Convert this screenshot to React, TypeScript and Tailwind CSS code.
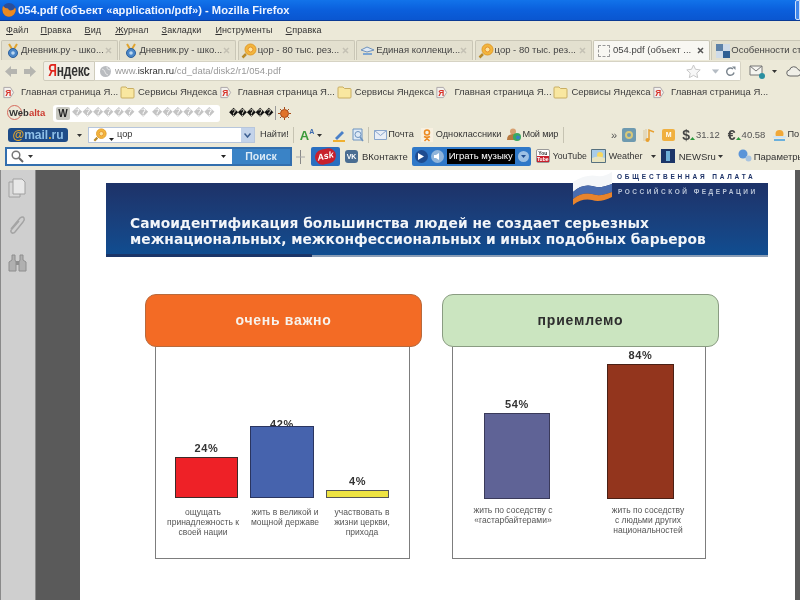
import React from "react";

const Ya = ({ className = "" }: { className?: string }) => (
  <svg width="13" height="13" viewBox="0 0 14 14" className={`shrink-0 ${className}`}>
    <path d="M2 1.500h7l3.500 5.500L9 12.500H2z" fill="#f3f1ee" stroke="#a9a4a8" />
    <text x="3.500" y="10.500" fontSize="9" fontWeight="700" fill="#d8342b" fontFamily="Liberation Sans">Я</text>
  </svg>
);

const Folder = () => (
  <svg width="15" height="13" viewBox="0 0 15 13" className="shrink-0">
    <path d="M1 3V2q0-1 1-1h4l1.500 1.500H13q1 0 1 1V11q0 1-1 1H2q-1 0-1-1z" fill="#f9e7a0" stroke="#c9ae62" />
  </svg>
);

const Medal = () => (
  <svg width="14" height="16" viewBox="0 0 14 16">
    <path d="M3 1l3 5M11 1L8 6" stroke="#e0a32e" strokeWidth="2" />
    <circle cx="7" cy="10" r="4.500" fill="#4a86c8" stroke="#2b5f9c" />
    <circle cx="7" cy="10" r="1.800" fill="#bcd8f0" />
  </svg>
);

const CoinSearch = ({ size = 16 }: { size?: number }) => (
  <svg width={size} height={size} viewBox="0 0 16 16" className="shrink-0">
    <path d="M5 11L1.500 14.500" stroke="#b88a2a" strokeWidth="2.500" />
    <circle cx="9.500" cy="6.500" r="5.500" fill="#f2b63c" stroke="#e29a28" />
    <circle cx="9.500" cy="6.500" r="2.500" fill="#fbe39c" stroke="#e8902c" />
  </svg>
);

const Triangle = ({ className = "", color = "#333" }: { className?: string; color?: string }) => (
  <svg width="5" height="3" viewBox="0 0 5 3" className={`shrink-0 ${className}`}>
    <path d="M0 0h5L2.500 3z" fill={color} />
  </svg>
);

const Close = ({ dark }: { dark?: boolean }) => (
  <svg width="7" height="7" viewBox="0 0 7 7" className="ml-auto shrink-0">
    <path d="M1 1l5 5M6 1L1 6" stroke={dark ? "#555" : "#c4c1b4"} strokeWidth="1.500" />
  </svg>
);

const Tab = ({ icon, label, active, closable = true }: { icon: React.ReactNode; label: string; active?: boolean; closable?: boolean }) => (
  <div className={`flex h-[20px] w-[117px] shrink-0 items-center rounded-t-[2px] border border-b-0 border-[#c9c6b6] pl-[3px] pr-[5px] ${active ? "bg-[#f8f7f2]" : "bg-[#e3e0cf]"}`}>
    <span className="flex w-[15px] shrink-0 justify-center">{icon}</span>
    <span className="ml-[1px] whitespace-nowrap text-[9.500px] text-[#444]">{label}</span>
    {closable && <Close dark={active} />}
  </div>
);

const Bookmarks = () => (
  <div className="flex h-[20px] shrink-0 items-center pl-[2px] pt-[1px] text-[9.500px] text-[#3c3c3c]">
    {[0, 1, 2, 3].map((i) => (
      <div key={i} className="flex w-[216.700px] shrink-0 items-center">
        <Ya />
        <span className="ml-[6px] w-[99px] shrink-0 whitespace-nowrap">Главная страница Я...</span>
        {i < 3 && (
          <>
            <Folder />
            <span className="ml-[3px] whitespace-nowrap">Сервисы Яндекса</span>
          </>
        )}
      </div>
    ))}
  </div>
);

const Sep = ({ className = "" }: { className?: string }) => <div className={`h-[16px] w-px shrink-0 bg-[#c6c3b2] ${className}`} />;

const Bar = ({ pct, h, color, border, w, labelClass = "mb-[2px]" }: { pct: string; h: string; color: string; border: string; w: string; labelClass?: string }) => (
  <div className={`flex flex-col items-center ${w}`}>
    <span className={`text-[11px] font-bold leading-[13px] tracking-[0.6px] text-[#333] ${labelClass}`}>{pct}</span>
    <div className={`w-full border ${h} ${color} ${border}`} />
  </div>
);

const Caption = ({ lines, className = "" }: { lines: string[]; className?: string }) => (
  <div className={`text-center text-[8.500px] leading-[10px] text-[#555] ${className}`}>
    {lines.map((l) => (
      <div key={l} className="whitespace-nowrap">{l}</div>
    ))}
  </div>
);

export default function App() {
  return (
    <div className="flex h-[600px] w-[800px] flex-col overflow-hidden bg-white font-['Liberation_Sans',sans-serif] blur-[0.5px]">
      {/* title bar */}
      <div className="flex h-[21px] shrink-0 items-center border-b border-[#0a3a94] bg-gradient-to-b from-[#1273ea] via-[#0b5fdc] to-[#0a56d0] pl-[1px]">
        <svg width="16" height="16" viewBox="0 0 16 16">
          <circle cx="8" cy="8" r="7" fill="#2a4f9c" />
          <path d="M2 4q-2 6 2 9.500 5 3 9-1 3-4 1-7-1 3-5 3-2-1-2-2-3 0-5-2.500z" fill="#ec8a22" />
        </svg>
        <span className="ml-[1px] whitespace-nowrap text-[11.200px] font-bold text-[#eef4ff]">054.pdf (объект «application/pdf») - Mozilla Firefox</span>
        <div className="ml-auto h-[20px] w-[5px] rounded-l-[2px] border border-[#cfe0f8] bg-[#3f86ea]" />
      </div>

      <div className="flex h-[149px] shrink-0 flex-col overflow-hidden bg-[#ece9d8]">
        {/* menu */}
        <div className="flex h-[19px] shrink-0 items-center pl-[6px] text-[9px] tracking-[0.1px] text-[#333]">
          <span><u>Ф</u>айл</span>
          <span className="ml-[12px]"><u>П</u>равка</span>
          <span className="ml-[13px]"><u>В</u>ид</span>
          <span className="ml-[14px]"><u>Ж</u>урнал</span>
          <span className="ml-[13px]"><u>З</u>акладки</span>
          <span className="ml-[14px]"><u>И</u>нструменты</span>
          <span className="ml-[13px]"><u>С</u>правка</span>
        </div>

        {/* tabs */}
        <div className="flex h-[20px] shrink-0 gap-[1.400px] pl-[1px]">
          <Tab icon={<Medal />} label="Дневник.ру - шко..." />
          <Tab icon={<Medal />} label="Дневник.ру - шко..." />
          <Tab icon={<CoinSearch />} label="цор - 80 тыс. рез..." />
          <Tab
            icon={
              <svg width="15" height="12" viewBox="0 0 15 12">
                <path d="M1 5l6-3 7 3-7 2z" fill="#dfe9f5" stroke="#6f93bd" />
                <path d="M3 8h9v2H3z" fill="#7da6d2" />
              </svg>
            }
            label="Единая коллекци..."
          />
          <Tab icon={<CoinSearch />} label="цор - 80 тыс. рез..." />
          <Tab
            active
            icon={<div className="h-[12px] w-[12px] rounded-[1px] border border-dashed border-[#999]" />}
            label="054.pdf (объект ..."
          />
          <Tab
            closable={false}
            icon={
              <svg width="14" height="14" viewBox="0 0 14 14">
                <path d="M0 0h7v7H0z" fill="#5e82a8" />
                <path d="M7 0h7v7H7z" fill="#cfdbe8" />
                <path d="M0 7h7v7H0z" fill="#cfdbe8" />
                <path d="M7 7h7v7H7z" fill="#2f5f92" />
              </svg>
            }
            label="Особенности ста"
          />
        </div>

        {/* nav */}
        <div className="flex h-[22px] shrink-0 items-center pl-[5px] [&>svg]:shrink-0">
          <svg width="12" height="11" viewBox="0 0 12 11"><path d="M0 5.500L6 0v3h6v5H6v3z" fill="#b5b5b0" /></svg>
          <svg width="12" height="11" viewBox="0 0 12 11" className="ml-[7px]"><path d="M12 5.500L6 0v3H0v5h6v3z" fill="#b5b5b0" /></svg>
          <div className="ml-[7px] flex h-[20px] w-[52px] shrink-0 items-center justify-center rounded-l-[2px] border border-[#cfccbc] bg-[#f1efe6] text-[12px] font-bold leading-none tracking-[-0.2px]">
            <span className="scale-y-[1.300] text-[#e0231c]">Я</span>
            <span className="scale-y-[1.300] text-[#333]">ндекс</span>
          </div>
          <div className="flex h-[20px] w-[646px] shrink-0 items-center rounded-r-[2px] border border-l-0 border-[#d6d3c4] bg-white pl-[5px] [&>svg]:shrink-0">
            <svg width="11" height="11" viewBox="0 0 11 11">
              <circle cx="5.500" cy="5.500" r="5.500" fill="#b9bcc0" />
              <path d="M2 3q3 1 3 3t3 3M7 1q-1 2 3 3" stroke="#e6e7e8" fill="none" />
            </svg>
            <span className="ml-[4px] whitespace-nowrap text-[9.500px] text-[#999]">www.<span className="text-[#333]">iskran.ru</span>/cd_data/disk2/r1/054.pdf</span>
            <svg width="15" height="14" viewBox="0 0 15 14" className="ml-auto">
              <path d="M7.500 1l2 4.300 4.700.6-3.400 3.200.9 4.600-4.200-2.300-4.200 2.300.9-4.600L.8 5.900l4.700-.6z" fill="#f7f7f7" stroke="#c8c8c8" />
            </svg>
            <Triangle className="ml-[12px] scale-[1.500]" color="#b5bcc4" />
            <svg width="11" height="11" viewBox="0 0 11 11" className="ml-[7px] mr-[4px]">
              <path d="M9 6.500A3.700 3.700 0 1 1 8 3" fill="none" stroke="#7d8790" strokeWidth="1.500" />
              <path d="M7 .5h3.500V4z" fill="#7d8790" />
            </svg>
          </div>
          <svg width="16" height="16" viewBox="0 0 16 16" className="ml-[8px]">
            <path d="M1 3h12v9H1z" fill="#f6f5f0" stroke="#777" />
            <path d="M1 3l6 5 6-5" fill="none" stroke="#777" />
            <circle cx="13" cy="13" r="3" fill="#2a8fa0" />
          </svg>
          <Triangle className="ml-[7px]" />
          <svg width="16" height="11" viewBox="0 0 16 11" className="ml-[9px]">
            <path d="M4 10a3 3 0 0 1-.5-6 4.500 4.500 0 0 1 8.500-.5 3.300 3.300 0 0 1 0 6.500z" fill="#f0efe8" stroke="#666" />
          </svg>
        </div>

        {/* bookmarks */}
        <Bookmarks />

        {/* webalta */}
        <div className="flex h-[22px] shrink-0 items-center pl-[7px] [&>svg]:shrink-0">
          <div className="relative flex h-[16px] w-[38px] shrink-0 items-center">
            <div className="absolute left-0 top-0 h-[15px] w-[15px] rounded-full border border-[#d66a5c]" />
            <span className="relative ml-[2px] text-[9.500px] font-bold leading-none text-[#333]">Web<span className="text-[#cc3b30]">alta</span></span>
          </div>
          <div className="ml-[8px] flex h-[17px] w-[167px] shrink-0 items-center rounded-[3px] bg-white pl-[3px]">
            <span className="flex h-[13px] w-[14px] shrink-0 items-center justify-center rounded-[2px] bg-[#c8c8c0] text-[10px] font-bold text-[#222]">W</span>
            <span className="ml-[2px] whitespace-nowrap font-['DejaVu_Sans',sans-serif] text-[10px] leading-none tracking-[0.2px] text-[#c4c4c4]">������ � ������</span>
          </div>
          <span className="ml-[9px] whitespace-nowrap font-['DejaVu_Sans',sans-serif] text-[9px] leading-none tracking-[-0.4px] text-[#111]">�����</span>
          <div className="ml-[2px] h-[14px] w-px shrink-0 bg-[#999]" />
          <svg width="13" height="13" viewBox="0 0 13 13" className="ml-[2px]">
            <circle cx="6.500" cy="6.500" r="4" fill="#e0722a" stroke="#a84a18" />
            <path d="M6.500 0v2M6.500 11v2M0 6.500h2M11 6.500h2M2 2l1.500 1.500M9.500 9.500L11 11M2 11l1.500-1.500M9.500 3.500L11 2" stroke="#a84a18" />
          </svg>
        </div>

        {/* mail row */}
        <div className="flex h-[22px] shrink-0 items-center pl-[8px] text-[9.200px] text-[#333] [&>svg]:shrink-0">
          <div className="flex h-[14px] w-[60px] shrink-0 items-center justify-center rounded-[3px] bg-[#1e4c88] text-[12px] font-bold leading-none text-[#8fc0e8]">
            <span className="text-[#e3a62c]">@</span>mail<span className="text-[#e3a62c]">.</span>ru
          </div>
          <Triangle className="ml-[9px]" />
          <div className="ml-[6px] flex h-[16px] w-[167px] shrink-0 items-center border border-[#b7c6dc] bg-white pl-[4px]">
            <CoinSearch size={14} />
            <Triangle className="ml-[2px] mt-[8px]" color="#222" />
            <span className="ml-[3px] text-[#333]">цор</span>
            <div className="ml-auto flex h-full w-[13px] items-center justify-center bg-[#c3d3ea]">
              <svg width="7" height="5" viewBox="0 0 7 5"><path d="M.5.500L3.500 4 6.500.5" fill="none" stroke="#3a5d90" strokeWidth="1.500" /></svg>
            </div>
          </div>
          <span className="ml-[5px] whitespace-nowrap">Найти!</span>
          <Sep className="ml-[4px]" />
          <span className="ml-[6px] text-[13px] font-bold leading-none text-[#3a9a3a]">A</span>
          <span className="-mt-[5px] text-[7px] font-bold text-[#3a6ab0]">A</span>
          <Triangle className="ml-[3px]" />
          <svg width="14" height="13" viewBox="0 0 14 13" className="ml-[10px]">
            <path d="M1 12h12" stroke="#f0b030" strokeWidth="2" />
            <path d="M3 9l7-7 2 2-7 7z" fill="#4a80c8" />
          </svg>
          <svg width="13" height="14" viewBox="0 0 13 14" className="ml-[6px]">
            <path d="M1 1h9v11H1z" fill="#dfeaf6" stroke="#6d93bf" />
            <circle cx="6" cy="6.500" r="3" fill="none" stroke="#6d93bf" />
            <path d="M8 9l3 4" stroke="#6d93bf" strokeWidth="1.500" />
          </svg>
          <Sep className="ml-[3px]" />
          <svg width="13" height="10" viewBox="0 0 13 10" className="ml-[5px]">
            <path d="M.5.500h12v9H.5z" fill="#e9eef6" stroke="#8aa6cc" />
            <path d="M.5.500l6 5 6-5" fill="none" stroke="#8aa6cc" />
          </svg>
          <span className="ml-[1px] whitespace-nowrap">Почта</span>
          <svg width="12" height="14" viewBox="0 0 12 14" className="ml-[7px]">
            <path d="M0 0h12v14H0z" fill="#f8f0e0" />
            <circle cx="6" cy="4.500" r="2.500" fill="none" stroke="#ec8a22" strokeWidth="1.500" />
            <path d="M3 8.500q3 1.500 6 0M6 9v2M3.500 13L6 10.500 8.500 13" fill="none" stroke="#ec8a22" strokeWidth="1.500" />
          </svg>
          <span className="ml-[3px] whitespace-nowrap">Одноклассники</span>
          <svg width="15" height="14" viewBox="0 0 15 14" className="ml-[6px]">
            <circle cx="6" cy="3.500" r="3" fill="#d8a070" />
            <path d="M0 12q0-6 6-6t6 6z" fill="#b87a40" />
            <circle cx="10" cy="9" r="4" fill="#3aa860" />
            <circle cx="11" cy="9.500" r="2" fill="#3a80c8" />
          </svg>
          <span className="whitespace-nowrap tracking-[-0.2px]">Мой мир</span>
          <Sep className="ml-[5px]" />
          <span className="ml-[47px] text-[11px] leading-none text-[#555]">»</span>
          <div className="ml-[5px] flex h-[14px] w-[14px] shrink-0 items-center justify-center rounded-[2px] bg-[#6e9ab0]">
            <div className="h-[8px] w-[8px] rounded-full border-2 border-[#d8c878]" />
          </div>
          <svg width="13" height="15" viewBox="0 0 13 15" className="ml-[6px]">
            <path d="M2 2v11M4 1v12" stroke="#d9c8a0" />
            <path d="M7 12V2l5 2" fill="none" stroke="#e8a030" strokeWidth="1.500" />
            <circle cx="5.500" cy="12" r="2" fill="#e8a030" />
          </svg>
          <div className="ml-[7px] flex h-[12px] w-[13px] shrink-0 items-center justify-center rounded-[2px] bg-[#f0b040] text-[7px] font-bold text-white">М</div>
          <span className="ml-[7px] text-[14px] font-bold leading-none text-[#444]">$</span>
          <Triangle className="mt-[6px] rotate-180" color="#2c9a3c" />
          <span className="ml-[1px] whitespace-nowrap text-[9.500px] text-[#555]">31.12</span>
          <span className="ml-[8px] text-[14px] font-bold leading-none text-[#444]">€</span>
          <Triangle className="mt-[6px] rotate-180" color="#2c9a3c" />
          <span className="ml-[1px] whitespace-nowrap text-[9.500px] text-[#555]">40.58</span>
          <svg width="13" height="13" viewBox="0 0 13 13" className="ml-[8px]">
            <circle cx="6.500" cy="5" r="4" fill="#f0a838" />
            <path d="M0 7h13v2H0z" fill="#cfe4f4" />
            <path d="M1 10h11v2H1z" fill="#6ab0dc" />
          </svg>
          <span className="ml-[1px] whitespace-nowrap">По</span>
        </div>

        {/* search row */}
        <div className="flex h-[24px] shrink-0 items-start pl-[5px] pt-[1px] text-[9.500px] text-[#333] [&>svg]:shrink-0">
          <div className="flex h-[19px] w-[287px] shrink-0 border-2 border-[#336fae] bg-white">
            <div className="flex flex-1 items-center pl-[4px]">
              <svg width="13" height="13" viewBox="0 0 13 13">
                <circle cx="5" cy="5" r="3.800" fill="none" stroke="#777" strokeWidth="1.500" />
                <path d="M8 8l4 4" stroke="#666" strokeWidth="2" />
              </svg>
              <Triangle className="ml-[4px]" />
              <Triangle className="ml-auto mr-[6px]" color="#222" />
            </div>
            <div className="flex w-[58px] items-center justify-center bg-[#3a83c6] text-[10.500px] font-bold text-[#dbeaf6]">Поиск</div>
          </div>
          <svg width="9" height="14" viewBox="0 0 9 14" className="ml-[4px] mt-[3px]">
            <path d="M4.500 0v14" stroke="#888" />
            <path d="M0 7h9" stroke="#aaa" />
          </svg>
          <div className="ml-[6px] flex h-[19px] w-[29px] shrink-0 items-center justify-center rounded-[2px] bg-[#2a6fc0]">
            <div className="flex h-[15px] w-[21px] -rotate-12 items-center justify-center rounded-full bg-[#c8202c] text-[9px] font-bold italic leading-none text-white">Ask</div>
          </div>
          <div className="ml-[5px] mt-[3px] flex h-[13px] w-[13px] shrink-0 items-center justify-center rounded-[3px] bg-[#4a6d92] text-[7px] font-bold leading-none text-white">VK</div>
          <span className="ml-[4px] mt-[3px] whitespace-nowrap">ВКонтакте</span>
          <div className="ml-[4px] flex h-[19px] w-[119px] shrink-0 items-center rounded-[2px] bg-[#2f78c8] pl-[3px]">
            <div className="flex h-[13px] w-[13px] items-center justify-center rounded-full bg-[#1e4c90]">
              <svg width="6" height="7" viewBox="0 0 6 7"><path d="M0 0l6 3.500L0 7z" fill="#fff" /></svg>
            </div>
            <div className="ml-[3px] flex h-[13px] w-[13px] items-center justify-center rounded-full bg-[#8fb4da]">
              <svg width="7" height="7" viewBox="0 0 7 7"><path d="M0 2h2l3-2v7L2 5H0z" fill="#fff" /></svg>
            </div>
            <div className="ml-[3px] flex h-[15px] w-[68px] items-center justify-center whitespace-nowrap bg-black text-[9.500px] text-white">Играть музыку</div>
            <div className="ml-[3px] flex h-[11px] w-[11px] items-center justify-center rounded-full bg-[#9cc0e4]">
              <Triangle color="#1e4c90" />
            </div>
          </div>
          <div className="ml-[5px] mt-[2px] flex h-[14px] w-[14px] shrink-0 flex-col items-center rounded-[2px] border border-[#999] bg-white text-[5px] font-bold leading-[6px]">
            <span className="text-[#333]">You</span>
            <span className="w-full bg-[#c8202c] text-center text-white">Tube</span>
          </div>
          <span className="ml-[3px] mt-[3px] w-[33px] shrink-0 whitespace-nowrap text-[8.700px]">YouTube</span>
          <svg width="15" height="14" viewBox="0 0 15 14" className="ml-[5px] mt-[2px]">
            <path d="M.5.500h14v13H.5z" fill="#a8cce8" stroke="#56707f" />
            <circle cx="9" cy="6" r="3" fill="#f8d860" />
            <path d="M1 13V9q6-3 13 0v4z" fill="#e8e4c0" />
          </svg>
          <span className="ml-[3px] mt-[3px] w-[34px] shrink-0 whitespace-nowrap text-[9px]">Weather</span>
          <Triangle className="ml-[8px] mt-[8px]" />
          <div className="ml-[5px] mt-[2px] flex h-[14px] w-[14px] shrink-0 items-center justify-center bg-[#1c3568]">
            <div className="h-[10px] w-[4px] bg-[#6fb0d8]" />
          </div>
          <span className="ml-[4px] mt-[3px] w-[38px] shrink-0 whitespace-nowrap">NEWSru</span>
          <Triangle className="ml-[1px] mt-[8px]" />
          <svg width="14" height="13" viewBox="0 0 14 13" className="ml-[15px] mt-[2px]">
            <circle cx="5" cy="5" r="4.500" fill="#5a94d8" />
            <circle cx="10.500" cy="9.500" r="3" fill="#a8c4e0" />
          </svg>
          <span className="ml-[2px] mt-[3px] whitespace-nowrap">Параметры</span>
        </div>
      </div>

      {/* document area */}
      <div className="flex min-h-0 flex-1">
        {/* pdf side panel */}
        <div className="flex w-[36px] shrink-0 flex-col items-start gap-[17px] border-x border-[#8a8a8a] bg-[#cfcfcf] pl-[7px] pt-[8px]">
          <svg width="19" height="20" viewBox="0 0 19 20">
            <path d="M1 4h11v15H1z" fill="#d8d8d8" stroke="#a0a0a0" />
            <path d="M5 1h9l3 3v12H5z" fill="#e8e8e8" stroke="#a0a0a0" />
          </svg>
          <svg width="18" height="22" viewBox="0 0 18 22">
            <path d="M3 14L12 3q3-2 4 0t-1 4L7 17q-2 2-3.500.5T4 14l7-8" fill="none" stroke="#a4a4a4" strokeWidth="1.500" />
          </svg>
          <svg width="19" height="19" viewBox="0 0 19 19">
            <path d="M4 1h3v5l1 2v9H1V8l3-2zM12 1h3v5l3 2v9h-7V8l1-2z" fill="#b0b0b0" stroke="#8e8e8e" />
            <path d="M8 7h3v4H8z" fill="#8e8e8e" />
          </svg>
        </div>
        <div className="w-[44px] shrink-0 bg-[#5a5a5a]" />

        {/* page */}
        <div className="min-w-0 flex-1 bg-white pl-[26px] pt-[13px]">
          <div className="relative h-[74px] w-[662px] bg-gradient-to-b from-[#1d3268] to-[#0e4e92]">
            <div className="absolute bottom-0 left-0 h-[3px] w-[206px] bg-[#1b3568]" />
            <div className="absolute bottom-0 left-[206px] right-0 h-[2px] bg-[#8a9db5]" />
            {/* flag logo */}
            <svg width="42" height="34" viewBox="0 0 42 34" className="absolute left-[466px] top-[-11px]">
              <path d="M1 10Q14 2 25 4q8 1 15-4v12Q28 17 20 14 10 12 1 20z" fill="#f4f6f8" />
              <path d="M1 20Q10 12 20 14q8 3 20-2v8Q28 25 20 22 10 20 1 27z" fill="#4a6cae" />
              <path d="M1 27Q10 20 20 22q8 3 20-2v5Q28 31 20 28 10 26 1 33z" fill="#e8842c" />
            </svg>
            <div className="absolute left-[511px] top-[-9px] whitespace-nowrap text-[6.500px] font-bold leading-none tracking-[2.800px] text-[#1d3268]">ОБЩЕСТВЕННАЯ ПАЛАТА</div>
            <div className="absolute left-[512px] top-[6px] whitespace-nowrap text-[6.500px] font-bold leading-none tracking-[2.500px] text-[#b8c4d8]">РОССИЙСКОЙ ФЕДЕРАЦИИ</div>
            <div className="pl-[24px] pt-[33px] font-['DejaVu_Sans',sans-serif] text-[13.800px] font-bold leading-[15.500px] text-[#f2f5f9]">
              <div className="whitespace-nowrap">Самоидентификация большинства людей не создает серьезных</div>
              <div className="whitespace-nowrap">межнациональных, межконфессиональных и иных подобных барьеров</div>
            </div>
          </div>

          <div className="ml-[39px] mt-[37px] flex gap-[20px]">
            {/* left chart */}
            <div className="flex w-[277px] flex-col">
              <div className="flex h-[53px] items-center justify-center rounded-[11px] border border-[#b86a3c] bg-[#f36b25] text-[14px] font-bold tracking-[0.7px] text-[#f7f2ec]">очень важно</div>
              <div className="ml-[10px] flex h-[212px] w-[255px] flex-col border-x border-b border-[#7d7d7d] bg-white pl-[19px]">
                <div className="flex h-[151px] items-end gap-[12px]">
                  <Bar pct="24%" h="h-[41px]" color="bg-[#ee2127]" border="border-[#3d2a2a]" w="w-[63px]" />
                  <Bar pct="42%" h="h-[72px]" color="bg-[#4663ad]" border="border-[#2a3560]" w="w-[64px]" labelClass="-mb-[5px]" />
                  <Bar pct="4%" h="h-[8px]" color="bg-[#eee342]" border="border-[#555]" w="w-[63px]" />
                </div>
                <div className="mt-[9px] flex">
                  <Caption lines={["ощущать", "принадлежность к", "своей нации"]} className="-ml-[10px] w-[76px]" />
                  <Caption lines={["жить в великой и", "мощной державе"]} className="ml-[8px] w-[72px]" />
                  <Caption lines={["участвовать в", "жизни церкви,", "прихода"]} className="ml-[8px] w-[66px]" />
                </div>
              </div>
            </div>

            {/* right chart */}
            <div className="flex w-[277px] flex-col">
              <div className="flex h-[53px] items-center justify-center rounded-[11px] border border-[#8a9c82] bg-[#cbe5c0] text-[14px] font-bold tracking-[0.8px] text-[#2e2e2e]">приемлемо</div>
              <div className="ml-[10px] flex h-[212px] w-[254px] flex-col border-x border-b border-[#7d7d7d] bg-white pl-[31px]">
                <div className="flex h-[152px] items-end gap-[57px]">
                  <Bar pct="54%" h="h-[86px]" color="bg-[#5f6396]" border="border-[#3a3a5a]" w="w-[66px]" />
                  <Bar pct="84%" h="h-[135px]" color="bg-[#93351d]" border="border-[#4a2015]" w="w-[67px]" />
                </div>
                <div className="mt-[6px] flex">
                  <Caption lines={["жить по соседству с", "«гастарбайтерами»"]} className="-ml-[11px] w-[80px]" />
                  <Caption lines={["жить по соседству", "с людьми других", "национальностей"]} className="ml-[58px] w-[74px]" />
                </div>
              </div>
            </div>
          </div>
        </div>
        <div className="w-[5px] shrink-0 bg-[#5a5a5a]" />
      </div>
    </div>
  );
}
